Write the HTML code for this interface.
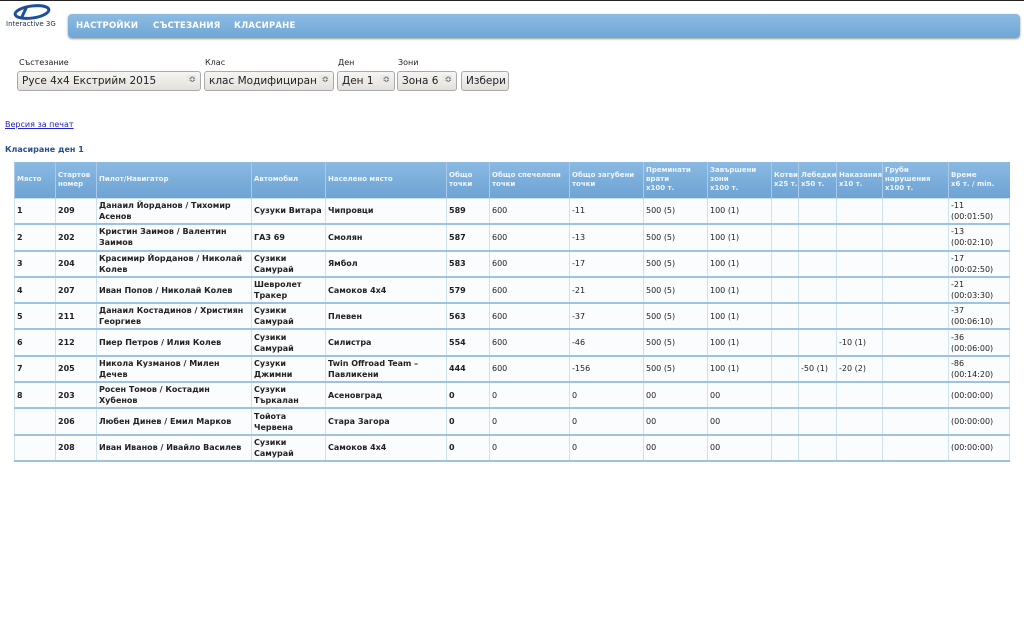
<!DOCTYPE html>
<html><head><meta charset="utf-8"><style>
*{box-sizing:border-box}
body{margin:0;width:1024px;height:640px;background:#fff;font-family:"DejaVu Sans","Liberation Sans",sans-serif;position:relative;overflow:hidden;border-top:1px solid #222}
.logo{position:absolute;left:5px;top:2px;width:58px;height:26px}
.logo span{position:absolute;left:1px;top:17px;font-size:7px;color:#234;white-space:nowrap}
.nav{position:absolute;left:68px;top:13px;width:952px;height:24px;border-radius:4px;background:linear-gradient(#8dbbe3,#6fa6d6);box-shadow:0 1px 2px #999}
.nav b{position:absolute;top:7px;color:#fff;font-size:8.5px;letter-spacing:.2px}
.lbl{position:absolute;top:57px;font-size:8px;color:#222}
.sel{position:absolute;top:70px;height:20px;border:1px solid #aaa;border-radius:3px;background:linear-gradient(#f6f5f3,#e3e0dc);font-size:10.5px;color:#222;padding:3px 4px;white-space:nowrap;overflow:hidden}
.sel i{position:absolute;right:4px;top:3px;font-style:normal;font-size:9px;color:#555;background:#ebe9e6;padding-left:2px}
a.pr{position:absolute;left:5px;top:119px;font-size:8px;color:#22c;text-decoration:underline}
.h{position:absolute;left:5px;top:144px;font-size:8px;font-weight:bold;color:#2a4f8a}
table{position:absolute;left:14px;top:161px;width:995px;border-collapse:collapse;table-layout:fixed;font-size:8px;color:#222}
th{height:36px;background:linear-gradient(#8bb9e2,#6ea3d4);color:#eef5fc;font-weight:bold;font-size:7px;text-align:left;vertical-align:middle;padding:0 2px;border-left:1px solid #a9cbeb;line-height:9px;white-space:nowrap;overflow:hidden}
td{height:26.3px;border:1px solid #cfe0ef;border-bottom:2px solid #9cc2e4;padding:0 2px;vertical-align:middle;line-height:11px;background:#fbfcfd}
td.b{font-weight:bold}
</style></head><body>
<div class="logo"><svg width="50" height="18" viewBox="0 0 50 18"><ellipse cx="27" cy="9" rx="17" ry="6" fill="none" stroke="#1d4f9c" stroke-width="3" transform="rotate(-8 27 9)"/><path d="M22 3 L16 16" stroke="#1d4f9c" stroke-width="3"/></svg><span>Interactive 3G</span></div>
<div class="nav"><b style="left:8px">НАСТРОЙКИ</b><b style="left:85px">СЪСТЕЗАНИЯ</b><b style="left:166px">КЛАСИРАНЕ</b></div>
<div class="lbl" style="left:19px">Състезание</div>
<div class="lbl" style="left:205px">Клас</div>
<div class="lbl" style="left:338px">Ден</div>
<div class="lbl" style="left:398px">Зони</div>
<div class="sel" style="left:17px;width:184px">Русе 4x4 Екстрийм 2015<i>≎</i></div>
<div class="sel" style="left:204px;width:130px">клас Модифициран<i>≎</i></div>
<div class="sel" style="left:337px;width:58px">Ден 1<i>≎</i></div>
<div class="sel" style="left:397px;width:60px">Зона 6<i>≎</i></div>
<div class="sel" style="left:461px;width:48px">Избери</div>
<a class="pr">Версия за печат</a>
<div class="h">Класиране ден 1</div>
<table>
<colgroup><col style="width:41px"><col style="width:41px"><col style="width:155px"><col style="width:74px"><col style="width:121px"><col style="width:43px"><col style="width:80px"><col style="width:74px"><col style="width:64px"><col style="width:64px"><col style="width:27px"><col style="width:38px"><col style="width:46px"><col style="width:66px"><col style="width:61px"></colgroup>
<tr><th>Място</th><th>Стартов<br>номер</th><th>Пилот/Навигатор</th><th>Автомобил</th><th>Населено място</th><th>Общо<br>точки</th><th>Общо спечелени<br>точки</th><th>Общо загубени<br>точки</th><th>Преминати<br>врати<br>x100 т.</th><th>Завършени<br>зони<br>x100 т.</th><th>Котви<br>x25 т.</th><th>Лебедки<br>x50 т.</th><th>Наказания<br>x10 т.</th><th>Груби<br>нарушения<br>x100 т.</th><th>Време<br>x6 т. / min.</th></tr>
<tr><td class="b">1</td><td class="b">209</td><td class="b">Данаил Йорданов / Тихомир Асенов</td><td class="b">Сузуки Витара</td><td class="b">Чипровци</td><td class="b">589</td><td>600</td><td>-11</td><td>500 (5)</td><td>100 (1)</td><td></td><td></td><td></td><td></td><td>-11 (00:01:50)</td></tr>
<tr><td class="b">2</td><td class="b">202</td><td class="b">Кристин Заимов / Валентин Заимов</td><td class="b">ГАЗ 69</td><td class="b">Смолян</td><td class="b">587</td><td>600</td><td>-13</td><td>500 (5)</td><td>100 (1)</td><td></td><td></td><td></td><td></td><td>-13 (00:02:10)</td></tr>
<tr><td class="b">3</td><td class="b">204</td><td class="b">Красимир Йорданов / Николай Колев</td><td class="b">Сузики Самурай</td><td class="b">Ямбол</td><td class="b">583</td><td>600</td><td>-17</td><td>500 (5)</td><td>100 (1)</td><td></td><td></td><td></td><td></td><td>-17 (00:02:50)</td></tr>
<tr><td class="b">4</td><td class="b">207</td><td class="b">Иван Попов / Николай Колев</td><td class="b">Шевролет Тракер</td><td class="b">Самоков 4x4</td><td class="b">579</td><td>600</td><td>-21</td><td>500 (5)</td><td>100 (1)</td><td></td><td></td><td></td><td></td><td>-21 (00:03:30)</td></tr>
<tr><td class="b">5</td><td class="b">211</td><td class="b">Данаил Костадинов / Християн Георгиев</td><td class="b">Сузики Самурай</td><td class="b">Плевен</td><td class="b">563</td><td>600</td><td>-37</td><td>500 (5)</td><td>100 (1)</td><td></td><td></td><td></td><td></td><td>-37 (00:06:10)</td></tr>
<tr><td class="b">6</td><td class="b">212</td><td class="b">Пиер Петров / Илия Колев</td><td class="b">Сузики Самурай</td><td class="b">Силистра</td><td class="b">554</td><td>600</td><td>-46</td><td>500 (5)</td><td>100 (1)</td><td></td><td></td><td>-10 (1)</td><td></td><td>-36 (00:06:00)</td></tr>
<tr><td class="b">7</td><td class="b">205</td><td class="b">Никола Кузманов / Милен Дечев</td><td class="b">Сузуки Джимни</td><td class="b">Twin Offroad Team – Павликени</td><td class="b">444</td><td>600</td><td>-156</td><td>500 (5)</td><td>100 (1)</td><td></td><td>-50 (1)</td><td>-20 (2)</td><td></td><td>-86 (00:14:20)</td></tr>
<tr><td class="b">8</td><td class="b">203</td><td class="b">Росен Томов / Костадин Хубенов</td><td class="b">Сузуки Търкалан</td><td class="b">Асеновград</td><td class="b">0</td><td>0</td><td>0</td><td>00</td><td>00</td><td></td><td></td><td></td><td></td><td>(00:00:00)</td></tr>
<tr><td class="b"></td><td class="b">206</td><td class="b">Любен Динев / Емил Марков</td><td class="b">Тойота Червена</td><td class="b">Стара Загора</td><td class="b">0</td><td>0</td><td>0</td><td>00</td><td>00</td><td></td><td></td><td></td><td></td><td>(00:00:00)</td></tr>
<tr><td class="b"></td><td class="b">208</td><td class="b">Иван Иванов / Ивайло Василев</td><td class="b">Сузики Самурай</td><td class="b">Самоков 4x4</td><td class="b">0</td><td>0</td><td>0</td><td>00</td><td>00</td><td></td><td></td><td></td><td></td><td>(00:00:00)</td></tr>
</table>
</body></html>
